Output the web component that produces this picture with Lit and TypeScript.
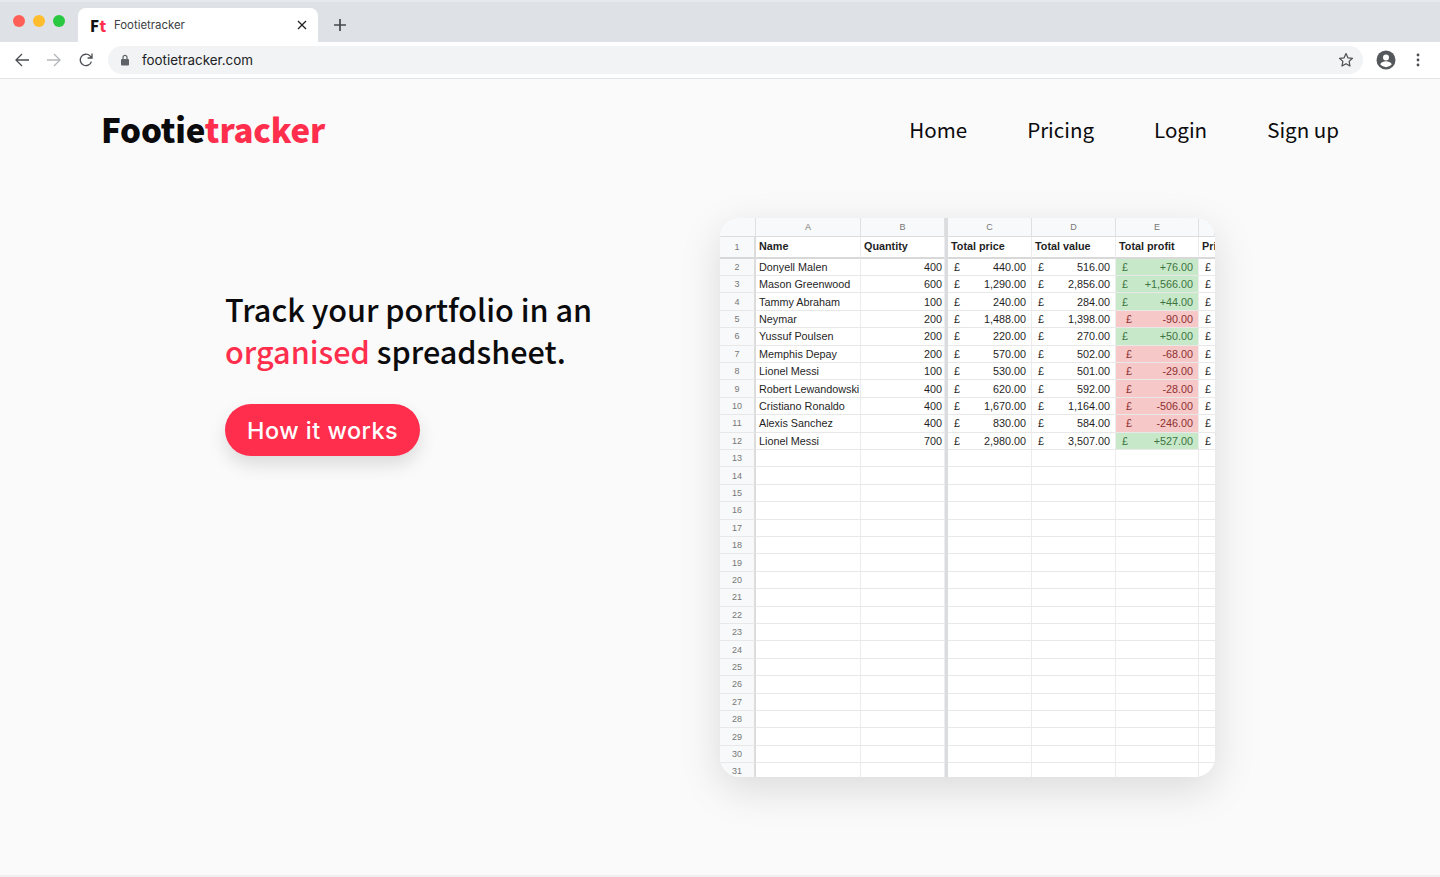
import { LitElement, html, css, svg } from "lit";
import { customElement } from "lit/decorators.js";

type Row = [string, string, string, string, string, string];
const ROWS: Row[] = [
  ["Donyell Malen", "400", "440.00", "516.00", "+76.00", "g"],
  ["Mason Greenwood", "600", "1,290.00", "2,856.00", "+1,566.00", "g"],
  ["Tammy Abraham", "100", "240.00", "284.00", "+44.00", "g"],
  ["Neymar", "200", "1,488.00", "1,398.00", "-90.00", "r"],
  ["Yussuf Poulsen", "200", "220.00", "270.00", "+50.00", "g"],
  ["Memphis Depay", "200", "570.00", "502.00", "-68.00", "r"],
  ["Lionel Messi", "100", "530.00", "501.00", "-29.00", "r"],
  ["Robert Lewandowski", "400", "620.00", "592.00", "-28.00", "r"],
  ["Cristiano Ronaldo", "400", "1,670.00", "1,164.00", "-506.00", "r"],
  ["Alexis Sanchez", "400", "830.00", "584.00", "-246.00", "r"],
  ["Lionel Messi", "700", "2,980.00", "3,507.00", "+527.00", "g"],
];

@customElement("app-root")
export class AppRoot extends LitElement {
  static styles = css`
    :host { display: flex; flex-direction: column; height: 877px; overflow: hidden; background: #fafafa; color: #0b0b0d; font-family: "Noto Sans CJK JP", "Noto Sans", sans-serif; }
    .tabstrip { height: 42px; flex: none; box-sizing: border-box; background: #dee1e6; border-top: 2px solid #e6e8ec; display: flex; align-items: flex-end; }
    .lights { display: flex; gap: 8px; width: 78px; box-sizing: border-box; padding: 0 0 15px 13px; }
    .lights i { width: 12px; height: 12px; border-radius: 50%; }
    .tab { width: 240px; height: 34px; box-sizing: border-box; background: #fff; border-radius: 8px 8px 0 0; display: flex; align-items: center; padding: 0 11px 0 12px; color: #3c4043; }
    .fav { font: 900 15px "Noto Sans CJK JP", sans-serif; color: #111; width: 24px; letter-spacing: .5px; }
    .fav b { color: #ff2e4d; font-weight: 900; }
    .tab-title { flex: 1; font-family: "Inter", sans-serif; font-size: 11.4px; }
    .tab svg { display: block; }
    .plus { margin: 0 0 10px 15px; display: block; }
    .toolbar { height: 36px; flex: none; box-sizing: border-box; background: #fff; display: flex; align-items: center; padding: 0 20px 0 14px; }
    .toolbar > svg { display: block; flex: none; }
    .gap { margin-left: 16px; }
    .omni { flex: 1; height: 28px; margin: 0 13px 0 14px; background: #f1f3f4; border-radius: 14px; display: flex; align-items: center; padding: 0 9px 0 12px; font: 13.4px "Inter", sans-serif; color: #202124; }
    .omni span { flex: 1; margin-left: 12px; }
    .rule { height: 1px; flex: none; background: #e3e4e6; }
    .profile { margin-right: 20px; }
    main { flex: 1; min-height: 0; }
    .foot { height: 2px; flex: none; background: #efefef; }
    header { display: flex; align-items: center; justify-content: space-between; padding: 24px 101px 1px 101px; height: 52px; }
    .logo { font-size: 33px; font-weight: 900; letter-spacing: -.15px; }
    .accent { color: #ff2e4d; }
    nav { display: flex; gap: 60px; font-size: 20.55px; }
    .hero { display: flex; padding: 62px 0 0 225px; }
    .pitch { width: 495px; padding-top: 70px; flex: none; }
    h1 { margin: 0; font-size: 30.6px; line-height: 42px; font-weight: 500; }
    .cta { display: inline-block; margin-top: 32px; height: 52px; padding: 0 22px; border-radius: 26px; background: #ff2e4d; color: #fff; font: 500 23.4px/54px "Inter", sans-serif; letter-spacing: .5px; box-shadow: 0 9px 18px rgba(0,0,0,.12); }
    .sheet { width: 495px; height: 559px; border-radius: 20px; overflow: hidden; background: #fff; box-shadow: 0 12px 42px rgba(0,0,0,.13); display: grid; grid-template-columns: 36px 105px 84px 3px 84px 84px 83px 16px; grid-template-rows: 19px 21.5px repeat(30, 17.41px); font: 10.8px "Liberation Sans", Arial, sans-serif; color: #1f1f1f; }
    .c { box-sizing: border-box; border-right: 1px solid #ececec; border-bottom: 1px solid #e8e8e8; display: flex; align-items: center; padding: 0 3px; white-space: nowrap; overflow: hidden; min-width: 0; }
    .head { background: #f8f9fa; justify-content: center; color: #777; font-size: 9px; border-bottom: 1px solid #dcdcdc; border-right-color: #e0e0e0; }
    .freeze { background: #dadcdf; }
    .num { justify-content: flex-end; padding-right: 2px; }
    .gutter { background: #f8f9fa; justify-content: center; color: #777; font-size: 9px; border-right: 2px solid #dcdcdc; padding: 0; }
    .title { font-weight: 700; padding-bottom: 2px; }
    .r1 { border-bottom: 2px solid #d8d8d8; }
    .money { justify-content: space-between; padding: 0 5px 0 6px; }
    .money.g { background: #c8e8ca; color: #3c7440; }
    .money.r { background: #f6c8c8; color: #8e3030; }
    .money.r span:first-child { margin-left: 4px; }
    .edge { padding-left: 6px; padding-right: 0; border-right: 0; }
    .clip { padding-right: 0; border-right: 0; }
  `;

  private cols = ["A", "B", "", "C", "D", "E", ""];

  private money(v: string, cls = "") {
    return html`<div class="c money ${cls}"><span>£</span><span>${v}</span></div>`;
  }

  private sheet() {
    const titles = ["Total price", "Total value", "Total profit"];
    const blank = Array.from({ length: 19 }, (_, i) => i + 13);
    return html`<div class="sheet">
      <div class="c head"></div>
      ${this.cols.map((c, i) => (i === 2 ? html`<div class="freeze"></div>` : html`<div class="c head">${c}</div>`))}
      <div class="c gutter r1">1</div>
      <div class="c title r1">Name</div>
      <div class="c title r1">Quantity</div>
      <div class="freeze"></div>
      ${titles.map((t) => html`<div class="c title r1">${t}</div>`)}
      <div class="c title r1 clip">Pri</div>
      ${ROWS.map(
        (r, i) => html`
          <div class="c gutter">${i + 2}</div>
          <div class="c">${r[0]}</div>
          <div class="c num">${r[1]}</div>
          <div class="freeze"></div>
          ${this.money(r[2])}${this.money(r[3])}${this.money(r[4], r[5])}
          <div class="c edge">£</div>
        `
      )}
      ${blank.map(
        (n) => html`
          <div class="c gutter">${n}</div>
          <div class="c"></div><div class="c"></div><div class="freeze"></div>
          <div class="c"></div><div class="c"></div><div class="c"></div><div class="c edge"></div>
        `
      )}
    </div>`;
  }

  render() {
    return html`
      <div class="tabstrip">
        <div class="lights">
          <i style="background:#ff5f57"></i><i style="background:#febc2e"></i><i style="background:#28c840"></i>
        </div>
        <div class="tab">
          <span class="fav">F<b>t</b></span>
          <span class="tab-title">Footietracker</span>
          <svg width="10" height="10" viewBox="0 0 10 10">${svg`<path d="M1 1l8 8M9 1l-8 8" stroke="#222" stroke-width="1.3" fill="none"/>`}</svg>
        </div>
        <svg class="plus" width="14" height="14" viewBox="0 0 14 14">${svg`<path d="M7 1v12M1 7h12" stroke="#45484c" stroke-width="1.7" fill="none"/>`}</svg>
      </div>
      <div class="toolbar">
        <svg width="16" height="16" viewBox="0 0 16 16">${svg`<path d="M15 8H2M8 2L2 8l6 6" stroke="#4a4d51" stroke-width="1.3" fill="none"/>`}</svg>
        <svg class="gap" width="16" height="16" viewBox="0 0 16 16">${svg`<path d="M1 8h13M8 2l6 6-6 6" stroke="#b4b6b9" stroke-width="1.3" fill="none"/>`}</svg>
        <svg class="gap" width="16" height="16" viewBox="0 0 16 16">${svg`<path d="M13.4 9.6A5.7 5.7 0 1 1 12 3.9L14 6M14 1.6V6H9.6" stroke="#4a4d51" stroke-width="1.3" fill="none"/>`}</svg>
        <div class="omni">
          <svg width="10" height="12" viewBox="0 0 10 12">${svg`<path d="M3 5V3.4a2 2 0 0 1 4 0V5" stroke="#5f6368" stroke-width="1.2" fill="none"/><rect x="1" y="5" width="8" height="6.5" rx="1" fill="#5f6368"/>`}</svg>
          <span>footietracker.com</span>
          <svg width="16" height="16" viewBox="0 0 16 16">${svg`<path d="M8 1.6l1.9 4.2 4.6.5-3.4 3.1.9 4.6L8 11.7 4 14l.9-4.6L1.5 6.3l4.6-.5z" stroke="#4a4d51" stroke-width="1.2" fill="none" stroke-linejoin="round"/>`}</svg>
        </div>
        <svg class="profile" width="20" height="20" viewBox="0 0 20 20">${svg`<circle cx="10" cy="10" r="9.5" fill="#54575b"/><circle cx="10" cy="7.4" r="3" fill="#fff"/><path d="M4.2 14.2c1.2-2 3.5-2.9 5.8-2.9s4.6.9 5.8 2.9A7.4 7.4 0 0 1 10 17.2a7.4 7.4 0 0 1-5.8-3z" fill="#fff"/>`}</svg>
        <svg width="4" height="14" viewBox="0 0 4 14">${svg`<circle cx="2" cy="2" r="1.4" fill="#4a4d51"/><circle cx="2" cy="7" r="1.4" fill="#4a4d51"/><circle cx="2" cy="12" r="1.4" fill="#4a4d51"/>`}</svg>
      </div>
      <div class="rule"></div>
      <main>
        <header>
          <div class="logo">Footie<span class="accent">tracker</span></div>
          <nav><span>Home</span><span>Pricing</span><span>Login</span><span>Sign up</span></nav>
        </header>
        <div class="hero">
          <div class="pitch">
            <h1>Track your portfolio in an<br /><span class="accent">organised</span> spreadsheet.</h1>
            <div class="cta">How it works</div>
          </div>
          ${this.sheet()}
        </div>
      </main>
      <div class="foot"></div>
    `;
  }
}
